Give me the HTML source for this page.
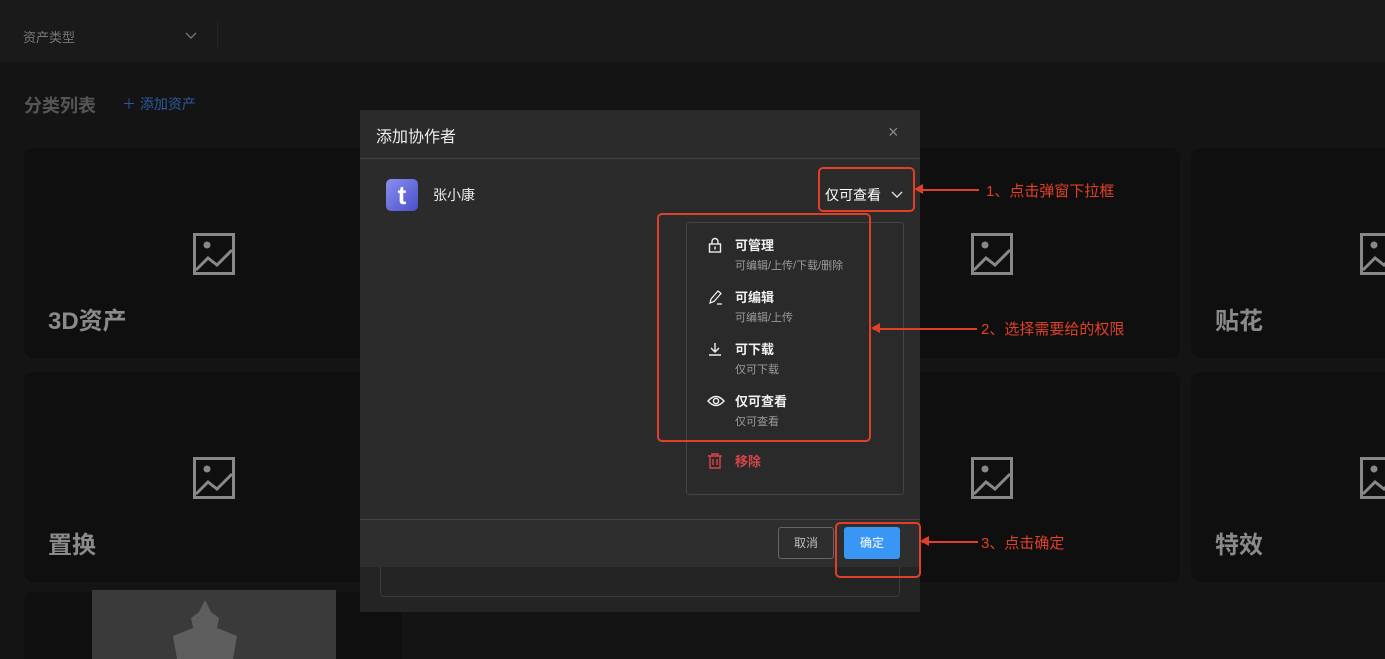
<!DOCTYPE html>
<html style="overflow:hidden;height:659px"><head><meta charset="utf-8"><style>
*{margin:0;padding:0;box-sizing:border-box}
body{width:1385px;height:659px;overflow:hidden;background:#141414;font-family:"Liberation Sans","Noto Sans CJK SC",sans-serif;position:relative}
.abs{position:absolute}
.card{position:absolute;background:#0f0f0f;border-radius:10px;width:378px;height:210px}
.card .t{position:absolute;left:24px;bottom:22px;font-size:24px;font-weight:bold;color:#8a8a8a}
.card svg{position:absolute;left:169px;top:85px}
.red{position:absolute;border:2px solid #e0402a;border-radius:5px}
.ann{position:absolute;color:#e0402a;font-size:15px}
.line{position:absolute;height:2px;background:#e0402a}
.item{position:absolute;left:20px}
.item b{display:block;font-size:13px;color:#f0f0f0;font-weight:bold;margin-left:28px}
.item span{display:block;font-size:11px;color:#9a9a9a;margin-left:28px;margin-top:3px}
.item svg{position:absolute;left:0;top:2px}
</style></head><body>
<div class="abs" style="left:0;top:0;width:1385px;height:62px;background:#1a1a1a"></div>
<div class="abs" style="left:23px;top:27px;font-size:13px;color:#777">资产类型</div>
<svg class="abs" style="left:185px;top:32px" width="12" height="8"><path d="M1 1l5 5 5-5" stroke="#777" fill="none" stroke-width="1.3"/></svg>
<div class="abs" style="left:217px;top:22px;width:1px;height:26px;background:#252525"></div>
<div class="abs" style="left:24px;top:92px;font-size:18px;font-weight:bold;color:#555">分类列表</div>
<div class="abs" style="left:122px;top:94px;font-size:14px;color:#2b5aa0">＋ 添加资产</div>

<div class="card" style="left:24px;top:148px"><svg width="42" height="42"><rect x="1.5" y="1.5" width="39" height="39" fill="none" stroke="#888" stroke-width="3"/><circle cx="14" cy="12" r="3.5" fill="#888"/><path d="M3 37l12-12 9 7 15-15" stroke="#888" stroke-width="3" fill="none"/></svg><div class="t">3D资产</div></div>
<div class="card" style="left:802px;top:148px"><svg width="42" height="42"><rect x="1.5" y="1.5" width="39" height="39" fill="none" stroke="#888" stroke-width="3"/><circle cx="14" cy="12" r="3.5" fill="#888"/><path d="M3 37l12-12 9 7 15-15" stroke="#888" stroke-width="3" fill="none"/></svg></div>
<div class="card" style="left:1191px;top:148px"><svg width="42" height="42"><rect x="1.5" y="1.5" width="39" height="39" fill="none" stroke="#888" stroke-width="3"/><circle cx="14" cy="12" r="3.5" fill="#888"/><path d="M3 37l12-12 9 7 15-15" stroke="#888" stroke-width="3" fill="none"/></svg><div class="t">贴花</div></div>
<div class="card" style="left:24px;top:372px"><svg width="42" height="42"><rect x="1.5" y="1.5" width="39" height="39" fill="none" stroke="#888" stroke-width="3"/><circle cx="14" cy="12" r="3.5" fill="#888"/><path d="M3 37l12-12 9 7 15-15" stroke="#888" stroke-width="3" fill="none"/></svg><div class="t">置换</div></div>
<div class="card" style="left:802px;top:372px"><svg width="42" height="42"><rect x="1.5" y="1.5" width="39" height="39" fill="none" stroke="#888" stroke-width="3"/><circle cx="14" cy="12" r="3.5" fill="#888"/><path d="M3 37l12-12 9 7 15-15" stroke="#888" stroke-width="3" fill="none"/></svg></div>
<div class="card" style="left:1191px;top:372px"><svg width="42" height="42"><rect x="1.5" y="1.5" width="39" height="39" fill="none" stroke="#888" stroke-width="3"/><circle cx="14" cy="12" r="3.5" fill="#888"/><path d="M3 37l12-12 9 7 15-15" stroke="#888" stroke-width="3" fill="none"/></svg><div class="t">特效</div></div>
<div class="card" style="left:24px;top:592px;height:67px;border-radius:10px 10px 0 0"></div>
<div class="abs" style="left:92px;top:590px;width:244px;height:69px;background:#3a3a3a"></div>
<svg class="abs" style="left:160px;top:598px" width="90" height="61"><path d="M45 2l-6 12-8 6 2 10-20 8 4 23h56l4-23-20-8 2-10-8-6z" fill="#5e5e5e"/></svg>

<!-- modal -->
<div class="abs" style="left:360px;top:110px;width:560px;height:502px;background:#2b2b2b"></div>
<div class="abs" style="left:376px;top:123px;font-size:16px;color:#eee">添加协作者</div>
<div class="abs" style="left:888px;top:122px;font-size:18px;color:#888">×</div>
<div class="abs" style="left:360px;top:158px;width:560px;height:1px;background:#444"></div>
<div class="abs" style="left:386px;top:179px;width:32px;height:32px;border-radius:5px;background:linear-gradient(135deg,#8a8ff0,#4a4fc8);color:#fff;font-size:26px;font-weight:bold;text-align:center;line-height:32px">t</div>
<div class="abs" style="left:433px;top:185px;font-size:14px;color:#eee">张小康</div>
<div class="abs" style="left:825px;top:185px;font-size:14px;color:#fff">仅可查看</div>
<svg class="abs" style="left:891px;top:191px" width="12" height="8"><path d="M1 1l5 5 5-5" stroke="#ddd" fill="none" stroke-width="1.4"/></svg>

<div class="abs" style="left:686px;top:222px;width:218px;height:273px;border:1px solid #444;border-radius:3px;background:#2a2a2a"></div>
<div class="item" style="left:707px;top:235px"><svg width="16" height="16"><rect x="2.5" y="7" width="11" height="8" fill="none" stroke="#eee" stroke-width="1.4"/><path d="M5 7V4.5a3 3 0 016 0V7" fill="none" stroke="#eee" stroke-width="1.4"/><rect x="7.3" y="9.5" width="1.4" height="3" fill="#eee"/></svg><b>可管理</b><span>可编辑/上传/下载/删除</span></div>
<div class="item" style="left:707px;top:287px"><svg width="16" height="16"><path d="M3 14l1-4 7-8 3 2.5-7 8z" fill="none" stroke="#eee" stroke-width="1.3"/><path d="M10 15h5" stroke="#eee" stroke-width="1.3"/></svg><b>可编辑</b><span>可编辑/上传</span></div>
<div class="item" style="left:707px;top:339px"><svg width="16" height="16"><path d="M8 2v9M4 7l4 4 4-4M2 14h12" fill="none" stroke="#eee" stroke-width="1.4"/></svg><b>可下载</b><span>仅可下载</span></div>
<div class="item" style="left:707px;top:391px"><svg width="18" height="16"><path d="M1 8q8-9 16 0q-8 9-16 0z" fill="none" stroke="#eee" stroke-width="1.4"/><circle cx="9" cy="8" r="2.6" fill="none" stroke="#eee" stroke-width="1.4"/></svg><b>仅可查看</b><span>仅可查看</span></div>
<div class="item" style="left:707px;top:451px"><svg width="16" height="16"><path d="M1 3h14M5 3V1h6v2M3 3v12h10V3M6 6v6M10 6v6" fill="none" stroke="#d8454a" stroke-width="1.4"/></svg><b style="color:#d8454a">移除</b></div>

<div class="abs" style="left:360px;top:519px;width:560px;height:1px;background:#444"></div>
<div class="abs" style="left:360px;top:520px;width:560px;height:47px;background:#2e2e2e"></div>
<div class="abs" style="left:360px;top:567px;width:560px;height:45px;background:#242424"></div>
<div class="abs" style="left:380px;top:567px;width:520px;height:30px;border:1px solid #3a3a3a;border-top:none;border-radius:0 0 4px 4px"></div>
<div class="abs" style="left:778px;top:527px;width:56px;height:32px;border:1px solid #666;border-radius:3px;color:#bbb;font-size:12px;text-align:center;line-height:30px">取消</div>
<div class="abs" style="left:844px;top:527px;width:56px;height:32px;background:#3a96f5;border-radius:3px;color:#fff;font-size:12px;text-align:center;line-height:32px">确定</div>

<!-- annotations -->
<div class="red" style="left:818px;top:167px;width:97px;height:45px"></div>
<div class="red" style="left:657px;top:213px;width:214px;height:229px"></div>
<div class="red" style="left:835px;top:522px;width:86px;height:56px"></div>
<div class="line" style="left:917px;top:189px;width:62px"></div>
<div class="ann" style="left:986px;top:180px">1、点击弹窗下拉框</div>
<div class="line" style="left:873px;top:328px;width:104px"></div>
<div class="ann" style="left:981px;top:318px">2、选择需要给的权限</div>
<div class="line" style="left:922px;top:541px;width:56px"></div>
<div class="ann" style="left:981px;top:532px">3、点击确定</div>
<svg class="abs" style="left:914px;top:183px" width="10" height="12"><path d="M0 6l9-5v10z" fill="#e0402a"/></svg>
<svg class="abs" style="left:871px;top:322px" width="10" height="12"><path d="M0 6l9-5v10z" fill="#e0402a"/></svg>
<svg class="abs" style="left:920px;top:535px" width="10" height="12"><path d="M0 6l9-5v10z" fill="#e0402a"/></svg>
</body></html>
